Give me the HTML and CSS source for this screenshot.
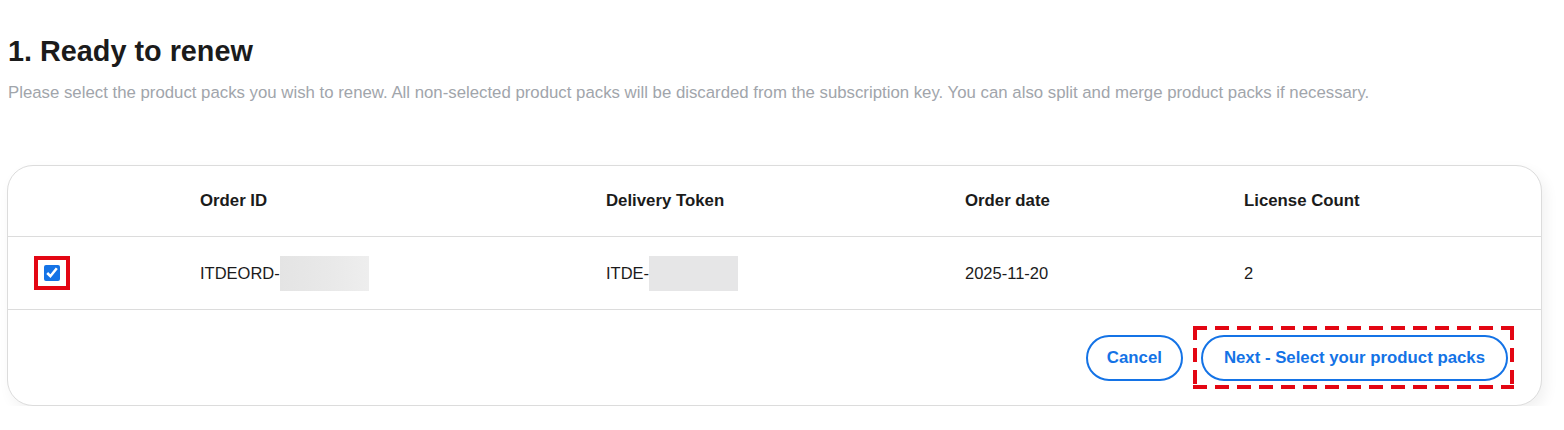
FILE: index.html
```html
<!DOCTYPE html>
<html lang="en">
<head>
<meta charset="utf-8">
<title>Ready to renew</title>
<link rel="stylesheet" href="styles.css">
</head>
<body>
<main class="page">
  <h1 class="title">1. Ready to renew</h1>
  <p class="subtitle">Please select the product packs you wish to renew. All non-selected product packs will be discarded from the subscription key. You can also split and merge product packs if necessary.</p>

  <section class="card">
    <div class="row head">
      <div class="cell"></div>
      <div class="cell">Order ID</div>
      <div class="cell">Delivery Token</div>
      <div class="cell">Order date</div>
      <div class="cell">License Count</div>
    </div>
    <div class="row body">
      <div class="cell check-cell">
        <span class="mark-box"><input class="check" type="checkbox" checked></span>
      </div>
      <div class="cell">ITDEORD-<span class="redact"></span></div>
      <div class="cell">ITDE-<span class="redact flat"></span></div>
      <div class="cell">2025-11-20</div>
      <div class="cell">2</div>
    </div>
    <div class="footer">
      <button class="btn" type="button">Cancel</button>
      <span class="mark-dash"><button class="btn" type="button">Next - Select your product packs</button></span>
    </div>
  </section>
</main>
</body>
</html>
```
FILE: styles.css
```css
* { box-sizing: border-box; }
html, body { margin: 0; padding: 0; background: #ffffff; }
body {
  font-family: "Liberation Sans", Arial, sans-serif;
  color: #1a1a1a;
}
.page {
  padding: 32px 22px 0 7px;
}
.title {
  margin: 0 0 0 1px;
  font-size: 28.8px;
  line-height: 38px;
  font-weight: 700;
  color: #1b1b1b;
}
.subtitle {
  margin: 13px 0 0 1px;
  font-size: 16.8px;
  line-height: 20px;
  color: #a1a5ab;
}
.card {
  margin-top: 62px;
  width: 1535px;
  border: 1px solid #dcdcdc;
  border-radius: 26px;
  background: #fff;
  box-shadow: 4px 6px 14px rgba(0, 0, 0, 0.06);
}
.row {
  display: grid;
  grid-template-columns: 192px 406px 359px 279px 1fr;
  align-items: center;
  border-bottom: 1px solid #dcdcdc;
}
.head { height: 71px; font-weight: 700; font-size: 16.8px; color: #1b1b1b; }
.body { height: 73px; font-size: 16.5px; color: #1b1b1b; }
.cell { display: flex; align-items: center; }
.check-cell { padding-left: 26px; }
.mark-box {
  display: inline-flex;
  align-items: center;
  justify-content: center;
  width: 36px;
  height: 34px;
  border: 4px solid #e30613;
}
.check {
  margin: 0;
  width: 16px;
  height: 16px;
  accent-color: #1473e6;
}
.redact {
  display: inline-block;
  width: 89px;
  height: 35px;
  background: linear-gradient(90deg, #e4e4e4 0%, #e9e9e9 60%, #eeeeee 100%);
}
.redact.flat { background: #e6e6e7; }
.footer {
  display: flex;
  justify-content: flex-end;
  align-items: center;
  gap: 10px;
  height: 95px;
  padding-right: 27px;
}
.btn {
  font-family: "Liberation Sans", Arial, sans-serif;
  font-size: 16.8px;
  font-weight: 700;
  color: #1473e6;
  background: #fff;
  border: 2px solid #1473e6;
  border-radius: 24px;
  height: 46px;
  padding: 0 19px;
  cursor: pointer;
}
.mark-dash .btn { padding: 0 21px; }
.mark-dash {
  display: inline-flex;
  align-items: center;
  padding: 9px 6px 8px 8px;
  background:
    repeating-linear-gradient(90deg, #e30613 0 14px, transparent 14px 22px) left top / 100% 4px no-repeat,
    repeating-linear-gradient(90deg, #e30613 0 14px, transparent 14px 22px) left bottom / 100% 4px no-repeat,
    repeating-linear-gradient(180deg, #e30613 0 14px, transparent 14px 22px) left top / 4px 100% no-repeat,
    repeating-linear-gradient(180deg, #e30613 0 14px, transparent 14px 22px) right top / 4px 100% no-repeat;
}
```
